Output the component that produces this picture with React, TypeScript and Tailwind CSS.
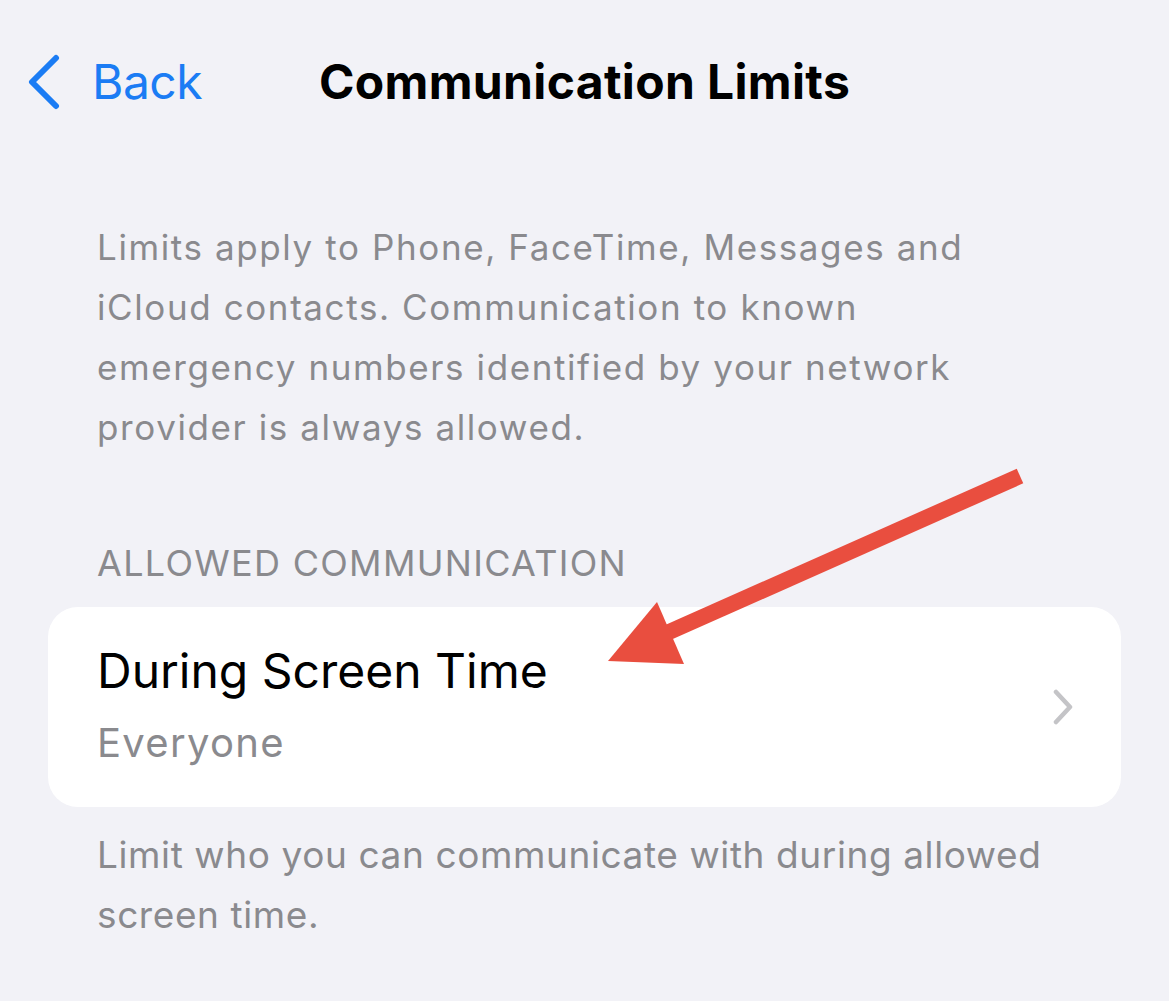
import React from 'react';

const font = { fontFamily: 'Inter, "Noto Sans", sans-serif' };

const BackChevron = () => (
  <svg width="36" height="56" viewBox="0 0 36 56" fill="none">
    <path d="M30 4 L6 28 L30 52" stroke="#1b7cf4" strokeWidth="6" strokeLinecap="round" strokeLinejoin="round" />
  </svg>
);

const RowChevron = () => (
  <svg width="24" height="36" viewBox="0 0 24 36" fill="none">
    <path d="M5 3 L19 18 L5 33" stroke="#c4c4c7" strokeWidth="4.5" strokeLinecap="round" strokeLinejoin="round" />
  </svg>
);

// red annotation arrow drawn over the list
const PointerArrow = () => (
  <svg className="pointer-events-none absolute left-0 top-0" width="1169" height="1001" viewBox="0 0 1169 1001">
    <line x1="1020" y1="476" x2="660" y2="636" stroke="#e94e3f" strokeWidth="16" />
    <polygon points="608,661 657,602 684,664" fill="#e94e3f" />
  </svg>
);

const App: React.FC = () => {
  return (
    <div className="relative min-h-screen w-full bg-[#f2f2f7] overflow-hidden" style={font}>
      <header className="grid h-[164px] grid-cols-[1fr_auto_1fr] items-center">
        <button className="flex items-center gap-[30px] pl-[26px] text-[#1b7cf4]">
          <BackChevron />
          <span className="text-[48px] leading-none tracking-[-0.5px]">Back</span>
        </button>
        <h1 className="text-[48px] font-bold leading-none tracking-[0.35px] text-black">Communication Limits</h1>
        <div />
      </header>

      <main>
        <p className="mt-[53px] pl-[97px] pr-[150px] text-[35px] leading-[60px] tracking-[1.6px] text-[#8a8a8e]">
          Limits apply to Phone, FaceTime, Messages and iCloud contacts. Communication to known emergency numbers identified by your network provider is always allowed.
        </p>

        <h2 className="mt-[84px] px-[97px] text-[36px] leading-[44px] tracking-[1.3px] text-[#8a8a8e]">
          ALLOWED COMMUNICATION
        </h2>

        <div className="mx-[48px] mt-[22px] flex h-[200px] items-center justify-between rounded-[30px] bg-white pl-[49px] pr-[46px]">
          <div className="flex flex-col gap-[12px]">
            <span className="text-[48px] leading-[60px] tracking-[0px] text-black">During Screen Time</span>
            <span className="text-[40px] leading-[60px] tracking-[1.3px] text-[#8a8a8e]">Everyone</span>
          </div>
          <RowChevron />
        </div>

        <p className="mt-[18px] pl-[97px] pr-[100px] text-[37px] leading-[60px] tracking-[0.6px] text-[#8a8a8e]">
          Limit who you can communicate with during allowed screen time.
        </p>
      </main>

      <PointerArrow />
    </div>
  );
};

export default App;
